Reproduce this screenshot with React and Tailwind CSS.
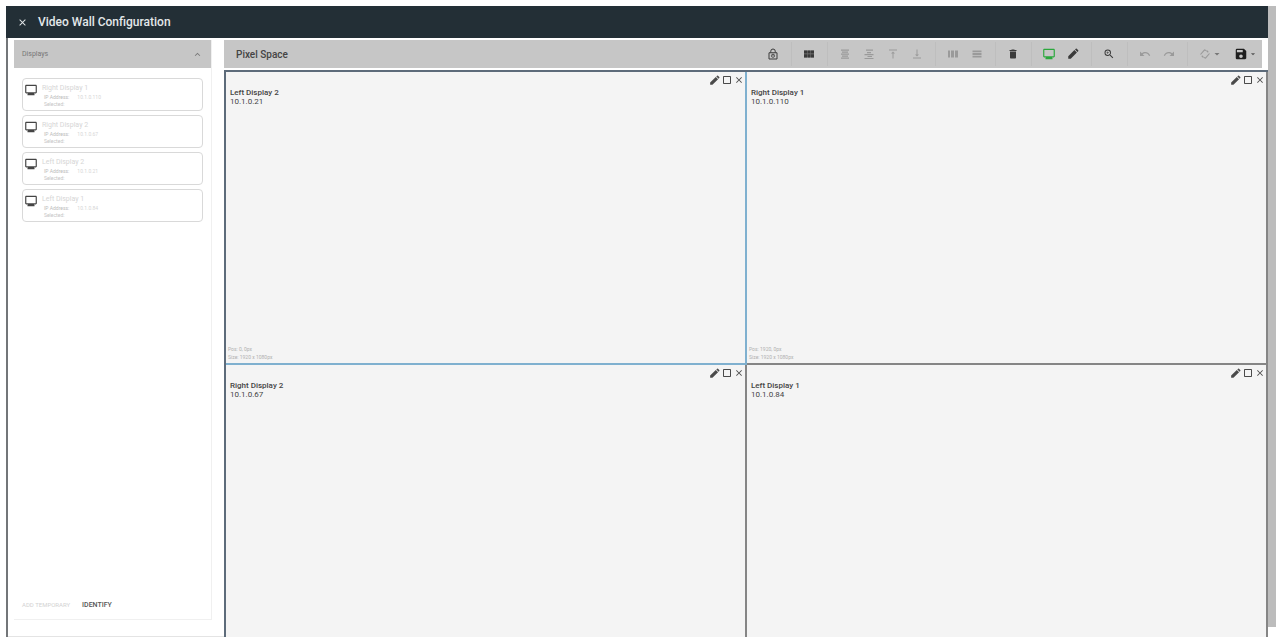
import { useState } from 'react'
import {
  MdArrowDropDown,
  MdClose,
  MdCropSquare,
  MdDelete,
  MdExpandLess,
  MdOutlineMonitor,
  MdRedo,
  MdSave,
  MdUndo,
  MdVerticalAlignBottom,
  MdVerticalAlignTop,
  MdZoomIn,
} from 'react-icons/md'

const DISPLAYS = [
  { name: 'Right Display 1', ip: '10.1.0.110' },
  { name: 'Right Display 2', ip: '10.1.0.67' },
  { name: 'Left Display 2', ip: '10.1.0.21' },
  { name: 'Left Display 1', ip: '10.1.0.84' },
]

const CELLS = [
  { name: 'Left Display 2', ip: '10.1.0.21', pos: 'Pos: 0, 0px', size: 'Size: 1920 x 1080px' },
  { name: 'Right Display 1', ip: '10.1.0.110', pos: 'Pos: 1920, 0px', size: 'Size: 1920 x 1080px' },
  { name: 'Right Display 2', ip: '10.1.0.67' },
  { name: 'Left Display 1', ip: '10.1.0.84' },
]

const TOOLS = [
  [{ label: 'Lock', icon: LockIcon }],
  [{ label: 'Grid', icon: GridIcon }],
  [
    { label: 'Align center', icon: AlignCenterIcon, off: true },
    { label: 'Align right', icon: AlignRightIcon, off: true },
    { label: 'Align top', icon: MdVerticalAlignTop, off: true },
    { label: 'Align bottom', icon: MdVerticalAlignBottom, off: true },
  ],
  [
    { label: 'Columns', icon: ColumnsIcon, off: true },
    { label: 'Rows', icon: RowsIcon, off: true },
  ],
  [{ label: 'Delete', icon: MdDelete }],
  [
    { label: 'Displays', icon: MdOutlineMonitor, green: true },
    { label: 'Edit', icon: PencilIcon },
  ],
  [{ label: 'Zoom', icon: MdZoomIn }],
  [
    { label: 'Undo', icon: MdUndo, off: true },
    { label: 'Redo', icon: MdRedo, off: true },
  ],
]

function toolColor(tool) {
  if (tool.green) return 'text-[#2aa83c]'
  return tool.off ? 'text-[#9a9a9a]' : 'text-[#3a3a3a]'
}

export default function App() {
  const [selected, setSelected] = useState('Left Display 2')
  const [open, setOpen] = useState(true)

  return (
    <div className="flex h-screen overflow-hidden bg-white pl-1.5 pt-1.5 font-[Roboto,sans-serif]">
      <div className="flex min-w-0 flex-1 flex-col">
        <header className="flex h-8 shrink-0 items-center gap-2.5 bg-[#232f36] px-2.5 text-[#e4e8ea]">
          <button type="button" aria-label="Close" className="flex w-3 justify-center">
            <MdClose size={11} />
          </button>
          <h1 className="text-xs font-medium">Video Wall Configuration</h1>
        </header>

        <div className="flex min-h-0 flex-1 border-l-2 border-[#737679]">
          <div className="flex w-[216px] shrink-0 flex-col border-b border-[#e4e4e4] pb-4 pl-1.5 pr-3 pt-0.5">
            <aside className="flex flex-1 flex-col border-b border-r border-[#f0f0f0]">
              <button
                type="button"
                onClick={() => setOpen(!open)}
                className="flex h-7 shrink-0 items-center justify-between bg-[#c6c6c6] px-2 text-[7px] text-[#777777]"
              >
                Displays
                <MdExpandLess size={11} />
              </button>
              {open && (
                <ul className="flex flex-col gap-1 px-2 pt-2.5">
                  {DISPLAYS.map(d => (
                    <DisplayItem key={d.name} display={d} />
                  ))}
                </ul>
              )}
              <div className="mt-auto flex gap-3 px-2 pb-2 text-[7px] leading-3">
                <button type="button" disabled className="text-[6px] text-[#d2d2d2]">ADD TEMPORARY</button>
                <button type="button" className="font-medium text-[#555555]">IDENTIFY</button>
              </div>
            </aside>
          </div>

          <main className="mt-0.5 flex min-w-0 flex-1 flex-col">
            <Toolbar />
            <div className="mt-0.5 grid min-h-0 flex-1 grid-cols-2 content-start overflow-hidden border-l-2 border-t-2 border-[#5d6b7a] bg-[#f4f4f4]">
              {CELLS.map(c => (
                <Cell
                  key={c.name}
                  cell={c}
                  active={c.name === selected}
                  onSelect={() => setSelected(c.name)}
                />
              ))}
            </div>
          </main>
        </div>
      </div>
      <div className="mb-2.5 w-2 shrink-0 bg-[#bcbcbc]" />
    </div>
  )
}

function Toolbar() {
  return (
    <div className="mr-1.5 flex h-7 shrink-0 items-center bg-[#c6c6c6] pl-3 pr-1">
      <h2 className="mr-auto text-[10px] font-medium text-[#444444]">Pixel Space</h2>
      <div className="flex items-center gap-[5px]">
        {TOOLS.map((group, i) => (
          <div key={i} className="flex items-center border-r border-[#bebebe] pr-1.5">
            {group.map(tool => (
              <button
                key={tool.label}
                type="button"
                aria-label={tool.label}
                disabled={tool.off}
                className={`flex h-6 w-6 items-center justify-center ${toolColor(tool)}`}
              >
                <tool.icon size={tool.green ? 14 : 12} />
              </button>
            ))}
          </div>
        ))}
        <button type="button" aria-label="Rotate" disabled className="flex h-6 items-center pl-1.5 text-[#999999]">
          <RotateIcon size={12} />
          <MdArrowDropDown size={12} className="text-[#777777]" />
        </button>
        <button type="button" aria-label="Save" className="flex h-6 items-center pl-1.5 text-[#1f1f1f]">
          <MdSave size={14} />
          <MdArrowDropDown size={10} className="text-[#555555]" />
        </button>
      </div>
    </div>
  )
}

function DisplayItem({ display }) {
  return (
    <li className="flex h-[33px] gap-1 rounded-sm border border-[#d9d9d9] pl-px pt-1">
      <MdOutlineMonitor size={14} className="shrink-0 text-[#444444]" />
      <div className="text-[#d6d6d6]">
        <p className="text-[7px] leading-[11px]">{display.name}</p>
        <div className="pl-0.5 text-[5px] leading-[7px]">
          <p className="flex gap-2">
            <span className="text-[#bbbbbb]">IP Address:</span>
            <span>{display.ip}</span>
          </p>
          <p className="text-[#c4c4c4]">Selected:</p>
        </div>
      </div>
    </li>
  )
}

function Cell({ cell, active, onSelect }) {
  return (
    <section
      onClick={onSelect}
      className={`flex aspect-video flex-col border-b-2 border-r-2 ${
        active ? 'border-[#7fb0cf]' : 'border-[#858585]'
      }`}
    >
      <div className="flex h-4 shrink-0 items-center justify-end gap-px pr-px text-[#4a4a4a]">
        <button type="button" aria-label={`Edit ${cell.name}`}><PencilIcon size={11} /></button>
        <button type="button" aria-label={`Maximize ${cell.name}`}><MdCropSquare size={12} /></button>
        <button type="button" aria-label={`Remove ${cell.name}`}><MdClose size={10} /></button>
      </div>
      <div className="px-1 text-[8px] leading-[9px] text-[#444444]">
        <h3 className="font-medium">{cell.name}</h3>
        <p>{cell.ip}</p>
      </div>
      {cell.pos && (
        <div className="mt-auto px-0.5 pb-0.5 text-[5px] leading-[8px] text-[#b0b0b0]">
          <p>{cell.pos}</p>
          <p>{cell.size}</p>
        </div>
      )}
    </section>
  )
}

function Icon({ size, children }) {
  return (
    <svg width={size} height={size} viewBox="0 0 24 24" fill="currentColor" aria-hidden>
      {children}
    </svg>
  )
}

function PencilIcon({ size }) {
  return (
    <Icon size={size}>
      <path d="M2.5 21.5v-5L14.8 4.2l5 5L7.5 21.5zM16 3l1.6-1.4a1.4 1.4 0 0 1 2 0l2.8 2.8a1.4 1.4 0 0 1 0 2L21 8z" />
    </Icon>
  )
}

function LockIcon({ size }) {
  return (
    <Icon size={size}>
      <path d="M4 9.5h16V22H4z" fill="none" stroke="currentColor" strokeWidth="2" />
      <path d="M7.5 9V6.5a4.5 4.5 0 0 1 9 0V9" fill="none" stroke="currentColor" strokeWidth="2" />
      <circle cx="12" cy="15.5" r="3.2" fill="none" stroke="currentColor" strokeWidth="1.6" />
      <path d="M11.2 12.5h1.6v3.6h-1.6z" />
    </Icon>
  )
}

function GridIcon({ size }) {
  return (
    <Icon size={size}>
      <path d="M2 5h20v14H2z" opacity="0.55" />
      <path d="M2 5h6v6H2zM9 5h6v6H9zM16 5h6v6h-6zM2 12.5h6V19H2zM9 12.5h6V19H9zM16 12.5h6V19h-6z" />
    </Icon>
  )
}

function AlignCenterIcon({ size }) {
  return (
    <Icon size={size}>
      <path d="M4 3h16v2.4H4zM6 7h12v2.4H6zM4 11h16v2.4H4zM6 15h12v2.4H6zM4 19h16v2.4H4z" />
    </Icon>
  )
}

function AlignRightIcon({ size }) {
  return (
    <Icon size={size}>
      <path d="M6 3h14v2.4H6zM8 8h8v2.4H8zM3 12h18v2.4H3zM9 16h9v2.2H9zM3 20h18v2.2H3z" />
    </Icon>
  )
}

function ColumnsIcon({ size }) {
  return (
    <Icon size={size}>
      <path d="M2 5h4v14H2zM8 5h6v14H8zM16 5h6v14h-6z" />
    </Icon>
  )
}

function RowsIcon({ size }) {
  return (
    <Icon size={size}>
      <path d="M3 5h18v3.6H3zM3 10.2h18v3.6H3zM3 15.4h18V19H3z" />
    </Icon>
  )
}

function RotateIcon({ size }) {
  return (
    <Icon size={size}>
      <path
        d="M3 13l8-9 3 1M21 11l-8 9-3-1M5.5 15.5L9 19M15 5l3.5 3.5"
        fill="none"
        stroke="currentColor"
        strokeWidth="2.2"
      />
    </Icon>
  )
}
